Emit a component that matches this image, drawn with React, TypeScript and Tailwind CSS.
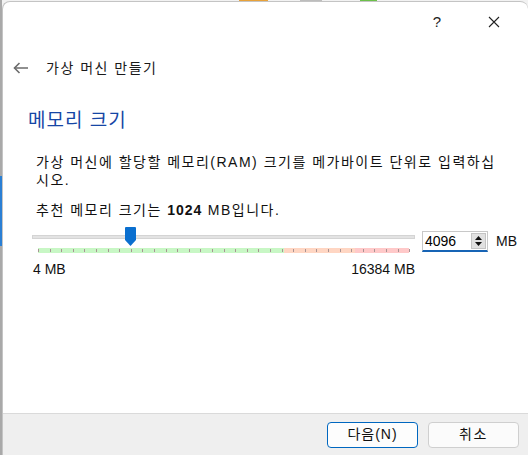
const font = { fontFamily: '"Liberation Sans", "Noto Sans CJK KR", sans-serif' };

const TICKS = Array.from({ length: 33 }, (_, i) => i);

const BackArrow = () => (
  <svg width="16" height="12" viewBox="0 0 16 12" fill="none" stroke="#6b6b6b" strokeWidth="1.6">
    <path d="M15 6H1.5" />
    <path d="M6.5 1L1.5 6l5 5" />
  </svg>
);

const MemorySlider = () => {
  return (
    <div className="relative w-[383px] h-[28px]">
      {/* track */}
      <div className="absolute left-0 right-0 top-[8px] h-[4px] bg-[#e3e3e3] border border-[#d4d4d4]" />
      {/* tick bar */}
      <div className="absolute left-[6px] top-[21px] h-[5px] w-[371px] flex">
        <div className="w-[246px] bg-[#c8f7c5]" />
        <div className="w-[71px] bg-[#ffd6c3]" />
        <div className="flex-1 bg-[#ffc9c9]" />
      </div>
      {TICKS.map((i) => (
        <div
          key={i}
          className="absolute top-[22px] w-px h-[3px] bg-[#a89393]"
          style={{ left: 6 + Math.round(i * 11.6) }}
        />
      ))}
      {/* thumb */}
      <svg className="absolute left-[93px] top-0" width="11" height="19" viewBox="0 0 11 19">
        <path d="M1 0h9a1 1 0 0 1 1 1v12l-5.5 6L0 13V1a1 1 0 0 1 1-1z" fill="#0a6fcf" />
      </svg>
    </div>
  );
};

const SpinBox = () => (
  <div className="flex items-center w-[66px] h-[21px] border border-[#c8c8c8] border-b-2 border-b-[#1764b5] bg-white">
    <span className="flex-1 pl-[2px] text-[14px] text-black leading-none">4096</span>
    <div className="w-[15px] h-[16px] mr-[1px] flex flex-col items-center justify-center gap-[2px] bg-[#e1e1e1] border border-[#c4c4c4]">
      <svg width="7" height="4" viewBox="0 0 7 4"><path d="M3.5 0L7 4H0z" fill="#111" /></svg>
      <svg width="7" height="4" viewBox="0 0 7 4"><path d="M0 0h7L3.5 4z" fill="#111" /></svg>
    </div>
  </div>
);

export default function App() {
  return (
    <div className="relative w-[528px] h-[455px] overflow-hidden bg-[#f2f2f2]" style={font}>
      {/* bits of the window behind */}
      <div className="absolute top-0 left-[239px] w-[29px] h-[2px] bg-[#e8a23a]" />
      <div className="absolute top-0 left-[300px] w-[22px] h-[2px] bg-[#bdbdbd]" />
      <div className="absolute top-0 left-[360px] w-[17px] h-[2px] bg-[#6cc04a]" />
      <div className="absolute top-0 left-0 w-[2px] h-[455px] bg-[#a9a9a9]" />
      <div className="absolute top-[176px] left-0 w-[2px] h-[70px] bg-[#2a7fd4]" />

      <div className="absolute left-[2px] top-[1px] w-[526px] h-[454px] flex flex-col bg-white rounded-t-[8px] border-t border-l border-[#c4c4c4] overflow-hidden">
        {/* title bar */}
        <div className="h-[40px] flex items-center justify-end pr-[28px] shrink-0">
          <span className="text-[15px] text-[#222] mr-[47px]">?</span>
          <svg width="12" height="12" viewBox="0 0 12 12" stroke="#222" strokeWidth="1.1">
            <path d="M1 1l10 10M11 1L1 11" />
          </svg>
        </div>

        {/* header */}
        <div className="h-[52px] flex items-center pl-[10px] shrink-0">
          <BackArrow />
          <span className="ml-[17px] text-[14px] tracking-[1.5px] text-[#1a1a1a]">가상 머신 만들기</span>
        </div>

        {/* page title */}
        <div className="pl-[25px] pt-[14px] text-[19px] tracking-[1px] leading-[26px] text-[#1646a5]">메모리 크기</div>

        {/* body */}
        <div className="pl-[33px] pt-[19px] text-[14px] tracking-[1.5px] leading-[18px] text-[#111]">
          <p>
            가상 머신에 할당할 메모리(RAM) 크기를 메가바이트 단위로 입력하십
            <br />
            시오.
          </p>
          <p className="mt-[12px]">
            추천 메모리 크기는 <b className="tracking-[1px]">1024</b> MB입니다.
          </p>
        </div>

        <div className="flex items-start pl-[29px] pt-[8px]">
          <div className="flex flex-col">
            <MemorySlider />
            <div className="flex justify-between text-[14px] leading-[18px] text-[#111] mt-[5px] pl-[1px]">
              <span>4 MB</span>
              <span>16384 MB</span>
            </div>
          </div>
          <div className="flex items-center ml-[7px] mt-[4px]">
            <SpinBox />
            <span className="ml-[8px] text-[14px] text-[#111]">MB</span>
          </div>
        </div>

        <div className="flex-1" />

        {/* footer */}
        <div className="h-[42px] shrink-0 border-t border-[#dadada] bg-[#efefef] flex items-center justify-end gap-[10px] pr-[9px]">
          <button className="w-[91px] h-[26px] rounded-[4px] border border-[#0067c0] bg-[#fdfdfd] text-[14px] tracking-[1px] text-[#111]">
            다음(N)
          </button>
          <button className="w-[91px] h-[26px] rounded-[4px] border border-[#cfcfcf] bg-[#fbfbfb] text-[14px] tracking-[1.5px] text-[#111]">
            취소
          </button>
        </div>
      </div>
    </div>
  );
}
